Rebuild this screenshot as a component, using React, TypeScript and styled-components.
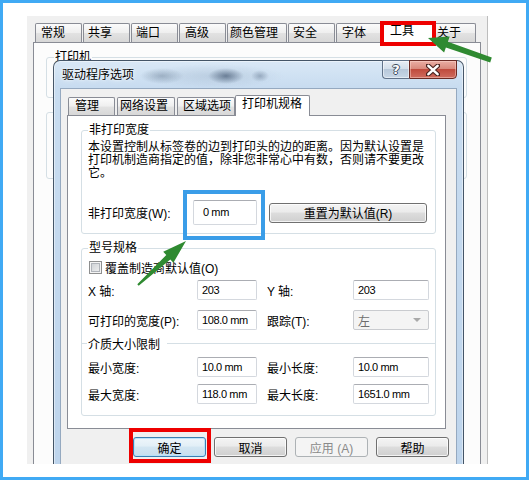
import React from "react";
import styled, { createGlobalStyle, css } from "styled-components";

const FONT = `"Liberation Sans", "Noto Sans CJK SC", sans-serif`;

const Global = createGlobalStyle`
  html, body { margin: 0; padding: 0; background: #fff; }
  body { font-family: ${FONT}; font-size: 12px; color: #000; }
`;

const Frame = styled.div`
  position: relative;
  box-sizing: border-box;
  width: 529px;
  height: 480px;
  border: 3px solid #40aaf4;
  background: #fff;
  padding: 13px 0 0 24px;
  overflow: hidden;
  font-family: ${FONT};
  font-size: 12px;
  color: #000;
`;

const Shot = styled.div`
  position: relative;
  z-index: 0;
  width: 461px;
  height: 448px;
  overflow: hidden;
`;

const BackWindow = styled.div`
  box-sizing: border-box;
  width: 100%;
  height: 100%;
  background: #f0f0f0;
  border-right: 1px solid #bdbdbd;
  padding: 5px 0 0 6px;
`;

const TabStrip = styled.div<{ $h: number; $gap: number; $indent: number }>`
  display: flex;
  align-items: flex-end;
  height: ${(p) => p.$h + 2}px;
  gap: ${(p) => p.$gap}px;
  margin: 0 0 -1px ${(p) => p.$indent}px;
`;

const Tab = styled.div<{ $w: number; $h: number; $pl: number; $sel?: boolean }>`
  box-sizing: border-box;
  flex: none;
  width: ${(p) => p.$w + (p.$sel ? 4 : 0)}px;
  height: ${(p) => p.$h + (p.$sel ? 2 : 0)}px;
  margin: 0 ${(p) => (p.$sel ? -2 : 0)}px;
  padding-left: ${(p) => p.$pl + (p.$sel ? 2 : 0)}px;
  border: 1px solid #898c95;
  border-bottom: none;
  border-radius: 2px 2px 0 0;
  line-height: ${(p) => p.$h - 2}px;
  white-space: nowrap;
  background: linear-gradient(#fbfbfb 0%, #efefef 45%, #e2e2e2 50%, #d6d6d6 100%);
  ${(p) =>
    p.$sel &&
    css`
      position: relative;
      z-index: 2;
      background: #fff;
    `}
`;

const BackPanel = styled.div`
  position: relative;
  z-index: 1;
  box-sizing: border-box;
  width: 448px;
  height: 430px;
  border: 1px solid #898c95;
  background: #fcfcfc;
  padding: 7px 0 0 12px;
`;

const Group = styled.fieldset<{ $w: number; $mt?: number; $pb?: number; $px?: number; $h?: number }>`
  box-sizing: border-box;
  width: ${(p) => p.$w}px;
  ${(p) => p.$h !== undefined && css`height: ${p.$h}px;`}
  min-width: 0;
  margin: ${(p) => p.$mt ?? 0}px 0 0 0;
  padding: 0 ${(p) => p.$px ?? 6}px ${(p) => p.$pb ?? 0}px;
  border: 1px solid #d5dfe5;
  border-radius: 3px;
`;

const Legend = styled.legend`
  padding: 0 1px;
  line-height: 14px;
`;

const PlainBox = styled.div`
  box-sizing: border-box;
  width: 421px;
  height: 67px;
  margin-top: 14px;
  border: 1px solid #d5dfe5;
  border-radius: 3px;
`;

/* ---------- dialog ---------- */

const Dialog = styled.div`
  position: absolute;
  z-index: 10;
  left: 26px;
  top: 44px;
  box-sizing: border-box;
  width: 411px;
  border: 1px solid rgba(38, 52, 70, 0.8);
  border-radius: 7px 7px 0 0;
  background:
    radial-gradient(ellipse 22px 8px at 108px 15px, rgba(120, 140, 162, 0.55), transparent),
    radial-gradient(ellipse 18px 8px at 172px 15px, rgba(78, 98, 124, 0.75), transparent),
    radial-gradient(ellipse 9px 6px at 206px 15px, rgba(110, 130, 155, 0.55), transparent),
    radial-gradient(ellipse 70px 12px at 160px 15px, rgba(150, 170, 192, 0.35), transparent),
    linear-gradient(#d9e8f6 0px, #c8dcf0 26px, #bdd4ec 100%);
  box-shadow: inset 0 0 0 1px rgba(255, 255, 255, 0.45);
`;

const TitleBar = styled.div`
  display: flex;
  align-items: center;
  height: 27px;
  box-sizing: border-box;
  padding: 0 6px 3px 8px;
`;

const Title = styled.span`
  font-size: 12px;
  text-shadow: 0 0 5px rgba(255, 255, 255, 0.95), 0 0 2px rgba(255, 255, 255, 0.9);
`;

const CaptionButtons = styled.div`
  display: flex;
  align-self: flex-start;
  margin: -1px 0 0 auto;
`;

const CaptionButton = styled.div<{ $kind: "help" | "close" }>`
  box-sizing: border-box;
  height: 19px;
  display: flex;
  align-items: center;
  justify-content: center;
  ${(p) =>
    p.$kind === "help"
      ? css`
          width: 27px;
          border: 1px solid #61738a;
          border-right: none;
          border-radius: 0 0 0 4px;
          background: linear-gradient(#e7eef6 0%, #d3dfeb 45%, #b7c8da 50%, #c8d7e7 100%);
          box-shadow: inset 0 0 0 1px rgba(255, 255, 255, 0.5);
        `
      : css`
          width: 48px;
          border: 1px solid #6a2a24;
          border-radius: 0 0 4px 0;
          background: linear-gradient(#eaaea4 0%, #d98a7d 45%, #c04b3d 50%, #cf6c5f 100%);
          box-shadow: inset 0 0 0 1px rgba(255, 220, 210, 0.45);
        `}
`;

const HelpGlyph = styled.span`
  font-family: "DejaVu Sans", sans-serif;
  font-weight: bold;
  font-size: 13px;
  line-height: 13px;
  color: #fff;
  text-shadow: -1px 0 #3c4b5c, 1px 0 #3c4b5c, 0 -1px #3c4b5c, 0 1px #3c4b5c;
`;

const Client = styled.div`
  box-sizing: border-box;
  width: 397px;
  margin-left: 6px;
  border: 1px solid #95a9c0;
  border-bottom: none;
  background: #f0f0f0;
  padding: 6px 0 30px 0;
`;

const Panel = styled.div`
  position: relative;
  z-index: 1;
  box-sizing: border-box;
  width: 379px;
  height: 314px;
  margin-left: 6px;
  border: 1px solid #898c95;
  background: #fff;
  padding: 7px 0 0 13px;
`;

const Desc = styled.p`
  margin: 4px 0 0;
  line-height: 13px;
`;

const WidthRow = styled.div`
  display: flex;
  align-items: center;
  height: 25px;
  margin-top: 20px;
`;

const RowLabel = styled.span<{ $w?: number; $pad?: number }>`
  ${(p) => p.$w !== undefined && css`width: ${p.$w}px;`}
  padding-left: ${(p) => p.$pad ?? 0}px;
  white-space: nowrap;
`;

const Field = styled.div<{ $w: number; $h?: number; $pl?: number }>`
  box-sizing: border-box;
  width: ${(p) => p.$w}px;
  height: ${(p) => p.$h ?? 20}px;
  line-height: ${(p) => (p.$h ?? 20) - 2}px;
  padding-left: ${(p) => p.$pl ?? 4}px;
  border: 1px solid #d4d8de;
  border-top-color: #abadb3;
  border-radius: 2px;
  background: #fff;
  white-space: nowrap;
  font-size: 11px;
  letter-spacing: -0.4px;
`;

const Button = styled.div<{ $w: number; $ml?: number; $variant?: "default" | "disabled" }>`
  box-sizing: border-box;
  width: ${(p) => p.$w}px;
  height: 20px;
  margin-left: ${(p) => p.$ml ?? 0}px;
  display: flex;
  align-items: center;
  justify-content: center;
  border: 1px solid #707070;
  border-radius: 3px;
  background: linear-gradient(#f4f4f4 0%, #ebebeb 45%, #dddddd 50%, #cfcfcf 100%);
  box-shadow: inset 0 0 0 1px rgba(255, 255, 255, 0.75);
  white-space: nowrap;
  ${(p) =>
    p.$variant === "default" &&
    css`
      border-color: #3c7fb1;
      background: linear-gradient(#eef6fb 0%, #e2eff7 45%, #d3e6f2 50%, #c8dfee 100%);
      box-shadow: inset 0 0 0 1px rgba(180, 225, 250, 0.9);
    `}
  ${(p) =>
    p.$variant === "disabled" &&
    css`
      border-color: #adb2b5;
      background: #f4f4f4;
      box-shadow: none;
      color: #8a8a8a;
    `}
`;

const CheckRow = styled.div`
  display: flex;
  align-items: center;
  height: 14px;
  margin-top: 5px;
`;

const CheckBox = styled.span`
  box-sizing: border-box;
  width: 13px;
  height: 13px;
  margin: 0 3px 0 1px;
  border: 1px solid #8e8f8f;
  background: linear-gradient(135deg, #c9cdd2, #f3f3f3);
  box-shadow: inset 0 0 0 1px #f4f4f4, inset 0 0 0 2px #b0b4ba;
`;

const SpecGrid = styled.div<{ $mt: number; $gap: number }>`
  display: grid;
  grid-template-columns: 109px 60px 96px 76px;
  grid-auto-rows: 20px;
  row-gap: ${(p) => p.$gap}px;
  align-items: center;
  margin-top: ${(p) => p.$mt}px;
`;

const Divider = styled.div`
  display: flex;
  align-items: center;
  height: 14px;
  margin: 6px -6px 0;
  &::before {
    content: "";
    width: 5px;
    height: 1px;
    margin-right: 1px;
    background: #d5dfe5;
  }
  &::after {
    content: "";
    flex: 1;
    height: 1px;
    margin-left: 7px;
    background: #d5dfe5;
  }
`;

const Select = styled.div`
  box-sizing: border-box;
  width: 76px;
  height: 20px;
  display: flex;
  align-items: center;
  justify-content: space-between;
  padding: 0 7px 0 4px;
  border: 1px solid #c9cbcf;
  border-radius: 2px;
  background: #f4f4f4;
  color: #6d6d6d;
`;

const Caret = styled.span`
  width: 0;
  height: 0;
  border-left: 4px solid transparent;
  border-right: 4px solid transparent;
  border-top: 4px solid #a9a9a9;
`;

const ButtonRow = styled.div`
  display: flex;
  gap: 8px;
  margin-top: 8px;
  padding-left: 72px;
`;

const Overlay = styled.svg`
  position: absolute;
  z-index: 20;
  left: -3px;
  top: -3px;
  pointer-events: none;
`;

type P = [number, number];
function arrow(tail: P, tip: P, tailW: number, baseW: number, headL: number, headW: number): string {
  const dx = tip[0] - tail[0];
  const dy = tip[1] - tail[1];
  const len = Math.hypot(dx, dy);
  const ux = dx / len;
  const uy = dy / len;
  const nx = -uy;
  const ny = ux;
  const bx = tip[0] - ux * headL;
  const by = tip[1] - uy * headL;
  const pts: P[] = [
    [tail[0] + (nx * tailW) / 2, tail[1] + (ny * tailW) / 2],
    [bx + (nx * baseW) / 2, by + (ny * baseW) / 2],
    [bx + (nx * headW) / 2, by + (ny * headW) / 2],
    tip,
    [bx - (nx * headW) / 2, by - (ny * headW) / 2],
    [bx - (nx * baseW) / 2, by - (ny * baseW) / 2],
    [tail[0] - (nx * tailW) / 2, tail[1] - (ny * tailW) / 2],
  ];
  return pts.map((p) => p.map((v) => v.toFixed(1)).join(",")).join(" ");
}

const backTabs = [
  { t: "常规", w: 47, pl: 5 },
  { t: "共享", w: 47, pl: 4 },
  { t: "端口", w: 47, pl: 4 },
  { t: "高级", w: 47, pl: 5 },
  { t: "颜色管理", w: 60, pl: 2 },
  { t: "安全", w: 47, pl: 4 },
  { t: "字体", w: 46, pl: 5 },
  { t: "工具", w: 49, pl: 6, sel: true },
  { t: "关于", w: 43, pl: 3 },
];

const dlgTabs = [
  { t: "管理", w: 47, pl: 6 },
  { t: "网络设置", w: 58, pl: 2 },
  { t: "区域选项", w: 58, pl: 5 },
  { t: "打印机规格", w: 71, pl: 4, sel: true },
];

export default function App() {
  return (
    <Frame>
      <Global />
      <Shot>
        <BackWindow>
          <TabStrip $h={20} $gap={1} $indent={2}>
            {backTabs.map((b) => (
              <Tab key={b.t} $w={b.w} $h={20} $pl={b.pl} $sel={b.sel}>
                {b.t}
              </Tab>
            ))}
          </TabStrip>
          <BackPanel>
            <Group $w={421} $h={48} $px={7}>
              <Legend>打印机</Legend>
            </Group>
            <PlainBox />
          </BackPanel>
        </BackWindow>

        <Dialog>
          <TitleBar>
            <Title>驱动程序选项</Title>
            <CaptionButtons>
              <CaptionButton $kind="help">
                <HelpGlyph>?</HelpGlyph>
              </CaptionButton>
              <CaptionButton $kind="close">
                <svg width="14" height="12" viewBox="0 0 14 12">
                  <path d="M2 1.5 L12 10.5 M12 1.5 L2 10.5" stroke="#4a2420" strokeWidth="4.6" strokeLinecap="round" />
                  <path d="M2.4 1.9 L11.6 10.1 M11.6 1.9 L2.4 10.1" stroke="#fff" strokeWidth="2.6" strokeLinecap="round" />
                </svg>
              </CaptionButton>
            </CaptionButtons>
          </TitleBar>
          <Client>
            <TabStrip $h={19} $gap={2} $indent={7}>
              {dlgTabs.map((b) => (
                <Tab key={b.t} $w={b.w} $h={19} $pl={b.pl} $sel={b.sel}>
                  {b.t}
                </Tab>
              ))}
            </TabStrip>
            <Panel>
              <Group $w={355} $pb={8}>
                <Legend>非打印宽度</Legend>
                <Desc>
                  本设置控制从标签卷的边到打印头的边的距离。因为默认设置是
                  <br />
                  打印机制造商指定的值，除非您非常心中有数，否则请不要更改
                  <br />
                  它。
                </Desc>
                <WidthRow>
                  <RowLabel $w={105}>非打印宽度(W):</RowLabel>
                  <Field $w={64} $h={25} $pl={9}>
                    0 mm
                  </Field>
                  <Button $w={158} $ml={12}>
                    重置为默认值(R)
                  </Button>
                </WidthRow>
              </Group>

              <Group $w={355} $mt={7} $pb={11}>
                <Legend>型号规格</Legend>
                <CheckRow>
                  <CheckBox />
                  <span>覆盖制造商默认值(O)</span>
                </CheckRow>
                <SpecGrid $mt={6} $gap={10}>
                  <RowLabel>X 轴:</RowLabel>
                  <Field $w={60}>203</Field>
                  <RowLabel $pad={10}>Y 轴:</RowLabel>
                  <Field $w={76}>203</Field>
                  <RowLabel>可打印的宽度(P):</RowLabel>
                  <Field $w={60}>108.0 mm</Field>
                  <RowLabel $pad={10}>跟踪(T):</RowLabel>
                  <Select>
                    <span>左</span>
                    <Caret />
                  </Select>
                </SpecGrid>
                <Divider>介质大小限制</Divider>
                <SpecGrid $mt={7} $gap={7}>
                  <RowLabel>最小宽度:</RowLabel>
                  <Field $w={60}>10.0 mm</Field>
                  <RowLabel $pad={10}>最小长度:</RowLabel>
                  <Field $w={76}>10.0 mm</Field>
                  <RowLabel>最大宽度:</RowLabel>
                  <Field $w={60}>118.0 mm</Field>
                  <RowLabel $pad={10}>最大长度:</RowLabel>
                  <Field $w={76}>1651.0 mm</Field>
                </SpecGrid>
              </Group>
            </Panel>
            <ButtonRow>
              <Button $w={73} $variant="default">确定</Button>
              <Button $w={73}>取消</Button>
              <Button $w={73} $variant="disabled">应用 (A)</Button>
              <Button $w={73}>帮助</Button>
            </ButtonRow>
          </Client>
        </Dialog>
      </Shot>

      <Overlay width={529} height={480} viewBox="0 0 529 480">
        <rect x={382} y={23} width={52} height={21} fill="none" stroke="#ee0000" strokeWidth={4} />
        <rect x={131} y={430} width={78} height={31} fill="none" stroke="#ee0000" strokeWidth={4} />
        <rect x={185} y={192} width={78} height={46} fill="none" stroke="#3a9de8" strokeWidth={4} />
        <polygon points={arrow([491, 60], [428, 38], 5, 6, 20, 17)} fill="#2f8a31" />
        <polygon points={arrow([138, 285], [186, 241], 2, 6, 24, 15)} fill="#2f8a31" />
      </Overlay>
    </Frame>
  );
}
